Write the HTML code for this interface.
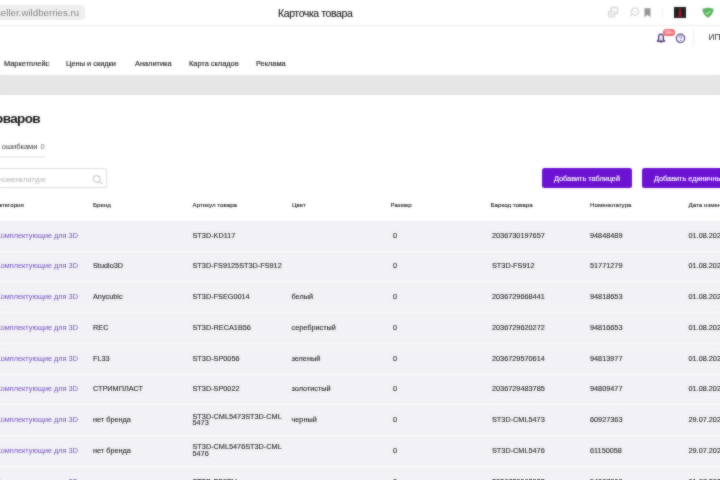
<!DOCTYPE html>
<html><head><meta charset="utf-8">
<style>
*{margin:0;padding:0;box-sizing:border-box}
html,body{width:720px;height:480px;overflow:hidden;background:#fff;font-family:"Liberation Sans",sans-serif;color:#222}
#page{position:absolute;left:0;top:0;width:720px;height:480px;overflow:hidden;background:#fff;}
.sharp{filter:blur(0.5px)}
.soft{filter:blur(1px);opacity:0.5}
.a{position:absolute;white-space:nowrap}
#top{position:absolute;left:0;top:0;width:720px;height:25.5px;background:#fff;border-bottom:1.5px solid #efefef}
.url{position:absolute;left:-10px;top:5px;width:95px;height:15px;background:#efefef;border-radius:4px}
.urlt{left:-4px;top:7px;font-size:9.6px;color:#858585;line-height:12px;letter-spacing:0.05px}
.title{left:278px;top:6px;font-size:10.5px;color:#1a1a1a;-webkit-text-stroke:0.1px #1a1a1a;letter-spacing:-0.4px;line-height:14px}
.nav{top:58.5px;font-size:7.4px;color:#1e1e1e;-webkit-text-stroke:0.15px #1e1e1e;line-height:10px}
#band{position:absolute;left:0;top:75px;width:720px;height:20px;background:#e6e6e6}
.h1{left:-5px;top:111px;font-size:13.5px;font-weight:bold;color:#151515;letter-spacing:-0.6px;line-height:16px}
.tab{left:-4px;top:141.5px;font-size:7.5px;color:#3a3a3a;line-height:10px}
.tabline{position:absolute;left:0;top:156px;width:46px;height:2px;background:#f0f0f0}
.search{position:absolute;left:-10px;top:168px;width:117px;height:20px;border:1px solid #e0e0e0;border-radius:2px}
.ph{left:-1px;top:174.5px;font-size:7.2px;color:#b4b4b4;line-height:10px}
.btn{position:absolute;top:168px;height:20px;background:#6c12d2;border-radius:2.5px;color:#fff;font-size:7.3px;line-height:22px;-webkit-text-stroke:0.15px #fff}
.th{top:200px;font-size:6.2px;font-weight:normal;color:#111;line-height:10px;-webkit-text-stroke:0.08px #111}
.sep{position:absolute;left:0;width:720px;height:5px;background:#f7f7fa;border-top:1px solid #efeff3;border-bottom:1px solid #efeff3}
.td{font-size:7.3px;color:#262626;line-height:10px;-webkit-text-stroke:0.1px #262626}
.cat{color:#7550c0;-webkit-text-stroke:0}
</style></head><body><div id="page" class="sharp">
<div id="top"></div>
<div class="url"></div>
<div class="a urlt">seller.wildberries.ru</div>
<div class="a title">Карточка товара</div>

<div class="a nav" style="left:4px">Маркетплейс</div>
<div class="a nav" style="left:66px">Цены и скидки</div>
<div class="a nav" style="left:135px">Аналитика</div>
<div class="a nav" style="left:189px">Карта складов</div>
<div class="a nav" style="left:256px">Реклама</div>
<div id="band"></div>

<div class="a h1">оваров</div>
<div class="a tab">с ошибками <span style="color:#777;margin-left:1px">0</span></div>
<div class="tabline"></div>
<div class="search"></div>
<div class="a ph">номенклатуре</div>

<div class="btn" style="left:542px;width:90px;text-align:center">Добавить таблицей</div>
<div class="btn" style="left:642px;width:100px;padding-left:12px">Добавить единичный</div>

<div class="a th" style="left:-5px">Категория</div>
<div class="a th" style="left:93px">Бренд</div>
<div class="a th" style="left:192.5px">Артикул товара</div>
<div class="a th" style="left:292px">Цвет</div>
<div class="a th" style="left:390.5px">Размер</div>
<div class="a th" style="left:490.5px">Баркод товара</div>
<div class="a th" style="left:590px">Номенклатура</div>
<div class="a th" style="left:688.5px">Дата изменения</div>


<svg class="a" style="left:606px;top:6px" width="14" height="12" viewBox="0 0 14 12">
 <rect x="5" y="1.5" width="6.5" height="6" rx="1.5" fill="none" stroke="#d6d6d6" stroke-width="1.4"/>
 <rect x="2.3" y="5" width="6.5" height="6" rx="1.5" fill="#ececec" stroke="#d9d9d9" stroke-width="1.1"/>
</svg>
<svg class="a" style="left:628px;top:6px" width="13" height="12" viewBox="0 0 13 12">
 <circle cx="7" cy="5.5" r="3.6" fill="none" stroke="#d9d9d9" stroke-width="1.4"/>
 <line x1="4.5" y1="8" x2="2.2" y2="10.3" stroke="#d9d9d9" stroke-width="1.4"/>
 <line x1="5.5" y1="5.5" x2="8.5" y2="5.5" stroke="#dedede" stroke-width="1"/>
</svg>
<svg class="a" style="left:643px;top:7px" width="9" height="11" viewBox="0 0 9 11">
 <path d="M1.5 1.2h6v9L4.5 7.8 1.5 10.2z" fill="#959595"/>
</svg>
<div style="position:absolute;left:662px;top:7px;width:1px;height:11px;background:#f4f4f4"></div>
<svg class="a" style="left:674px;top:6.5px" width="12" height="11.5" viewBox="0 0 12 11.5">
 <rect x="0" y="0" width="12" height="11.5" fill="#202020"/>
 <path d="M5.3 1.8h1.4l1.2 8.2H4.1z" fill="#8e1424"/>
 <rect x="5.6" y="1.2" width="0.8" height="9" fill="#b81d30"/>
</svg>
<svg class="a" style="left:701.5px;top:6.5px" width="12" height="11" viewBox="0 0 12 11">
 <path d="M6 0.5C8 1.3 9.8 1.6 11.5 1.6 11.4 6.2 9.2 9 6 10.7 2.8 9 0.6 6.2 0.5 1.6 2.2 1.6 4 1.3 6 0.5z" fill="#5bb360"/>
 <path d="M3.8 5.3 5.4 7 8.4 3.9" fill="none" stroke="#b5e6b8" stroke-width="1.2"/>
</svg>

<svg class="a" style="left:656px;top:32.8px" width="10" height="10" viewBox="0 0 10 10">
 <path d="M5 1.2C3.4 1.2 2.6 2.5 2.6 4.1v2.5L1.2 8.1h7.6L7.4 6.6V4.1C7.4 2.5 6.6 1.2 5 1.2z" fill="#eee8f8" stroke="#4a3278" stroke-width="1.2" stroke-linejoin="round"/>
 <path d="M3.2 8h3.6v1.3H3.2z" fill="#3c2468"/>
</svg>
<div style="position:absolute;left:662.8px;top:29px;width:12.5px;height:6.5px;background:#f06b6e;border-radius:3.3px"></div>
<div class="a" style="left:663.3px;top:29.3px;width:12px;text-align:center;font-size:5px;line-height:6px;color:#fde;font-weight:bold">99+</div>
<svg class="a" style="left:675px;top:32.5px" width="11" height="11" viewBox="0 0 11 11">
 <circle cx="5.5" cy="5.3" r="4.2" fill="#f3f0fa" stroke="#5a4a80" stroke-width="1.2"/>
 <path d="M4.3 4.2c0-.7.5-1.2 1.2-1.2s1.2.5 1.2 1.1c0 .8-1.1 .9-1.1 1.8" fill="none" stroke="#7a5cc0" stroke-width=".9"/>
 <circle cx="5.6" cy="7.4" r=".55" fill="#7a5cc0"/>
</svg>
<div style="position:absolute;left:693px;top:29px;width:1px;height:17px;background:#f0f0f0"></div>
<div class="a" style="left:708.5px;top:32.8px;font-size:8.2px;line-height:10px;color:#333">ИП</div>

<svg class="a" style="left:91px;top:172.5px" width="14" height="14" viewBox="0 0 14 14">
 <circle cx="5.7" cy="6" r="3.3" fill="none" stroke="#cfcfcf" stroke-width="1.2"/>
 <line x1="8.2" y1="8.5" x2="11.5" y2="11" stroke="#cfcfcf" stroke-width="1.3"/>
</svg>

<div style="position:absolute;left:0;top:221px;width:720px;height:259px;background:#f2f2f6"></div>
<div class="sep" style="top:248.7px"></div>
<div class="sep" style="top:279.4px"></div>
<div class="sep" style="top:310.1px"></div>
<div class="sep" style="top:340.9px"></div>
<div class="sep" style="top:371.6px"></div>
<div class="sep" style="top:402.3px"></div>
<div class="sep" style="top:433.0px"></div>
<div class="sep" style="top:463.7px"></div>
<div class="a td cat" style="left:-3.5px;top:230.6px">Комплектующие для 3D</div>
<div class="a td" style="left:192.5px;top:230.6px">ST3D-KD117</div>
<div class="a td" style="left:393px;top:230.6px">0</div>
<div class="a td" style="left:492px;top:230.6px">2036730197657</div>
<div class="a td" style="left:590px;top:230.6px">94848489</div>
<div class="a td" style="left:688.5px;top:230.6px">01.08.2021</div>
<div class="a td cat" style="left:-3.5px;top:261.3px">Комплектующие для 3D</div>
<div class="a td" style="left:93px;top:261.3px">Studio3D</div>
<div class="a td" style="left:192.5px;top:261.3px">ST3D-FS9125ST3D-FS912</div>
<div class="a td" style="left:393px;top:261.3px">0</div>
<div class="a td" style="left:492px;top:261.3px">ST3D-FS912</div>
<div class="a td" style="left:590px;top:261.3px">51771279</div>
<div class="a td" style="left:688.5px;top:261.3px">01.08.2021</div>
<div class="a td cat" style="left:-3.5px;top:292.0px">Комплектующие для 3D</div>
<div class="a td" style="left:93px;top:292.0px">Anycubic</div>
<div class="a td" style="left:192.5px;top:292.0px">ST3D-FSEG0014</div>
<div class="a td" style="left:291.5px;top:292.0px">белый</div>
<div class="a td" style="left:393px;top:292.0px">0</div>
<div class="a td" style="left:492px;top:292.0px">2036729668441</div>
<div class="a td" style="left:590px;top:292.0px">94818653</div>
<div class="a td" style="left:688.5px;top:292.0px">01.08.2021</div>
<div class="a td cat" style="left:-3.5px;top:322.8px">Комплектующие для 3D</div>
<div class="a td" style="left:93px;top:322.8px">REC</div>
<div class="a td" style="left:192.5px;top:322.8px">ST3D-RECA1B56</div>
<div class="a td" style="left:291.5px;top:322.8px">серебристый</div>
<div class="a td" style="left:393px;top:322.8px">0</div>
<div class="a td" style="left:492px;top:322.8px">2036729620272</div>
<div class="a td" style="left:590px;top:322.8px">94816653</div>
<div class="a td" style="left:688.5px;top:322.8px">01.08.2021</div>
<div class="a td cat" style="left:-3.5px;top:353.5px">Комплектующие для 3D</div>
<div class="a td" style="left:93px;top:353.5px">FL33</div>
<div class="a td" style="left:192.5px;top:353.5px">ST3D-SP0056</div>
<div class="a td" style="left:291.5px;top:353.5px">зеленый</div>
<div class="a td" style="left:393px;top:353.5px">0</div>
<div class="a td" style="left:492px;top:353.5px">2036729570614</div>
<div class="a td" style="left:590px;top:353.5px">94813977</div>
<div class="a td" style="left:688.5px;top:353.5px">01.08.2021</div>
<div class="a td cat" style="left:-3.5px;top:384.2px">Комплектующие для 3D</div>
<div class="a td" style="left:93px;top:384.2px">СТРИМПЛАСТ</div>
<div class="a td" style="left:192.5px;top:384.2px">ST3D-SP0022</div>
<div class="a td" style="left:291.5px;top:384.2px">золотистый</div>
<div class="a td" style="left:393px;top:384.2px">0</div>
<div class="a td" style="left:492px;top:384.2px">2036729483785</div>
<div class="a td" style="left:590px;top:384.2px">94809477</div>
<div class="a td" style="left:688.5px;top:384.2px">01.08.2021</div>
<div class="a td cat" style="left:-3.5px;top:414.9px">Комплектующие для 3D</div>
<div class="a td" style="left:93px;top:414.9px">нет бренда</div>
<div class="a td" style="left:192.5px;top:411.6px">ST3D-CML5473ST3D-CML</div>
<div class="a td" style="left:192.5px;top:418.2px">5473</div>
<div class="a td" style="left:291.5px;top:414.9px">черный</div>
<div class="a td" style="left:393px;top:414.9px">0</div>
<div class="a td" style="left:492px;top:414.9px">ST3D-CML5473</div>
<div class="a td" style="left:590px;top:414.9px">60927363</div>
<div class="a td" style="left:688.5px;top:414.9px">29.07.2021</div>
<div class="a td cat" style="left:-3.5px;top:445.6px">Комплектующие для 3D</div>
<div class="a td" style="left:93px;top:445.6px">нет бренда</div>
<div class="a td" style="left:192.5px;top:442.3px">ST3D-CML5476ST3D-CML</div>
<div class="a td" style="left:192.5px;top:448.9px">5476</div>
<div class="a td" style="left:393px;top:445.6px">0</div>
<div class="a td" style="left:492px;top:445.6px">ST3D-CML5476</div>
<div class="a td" style="left:590px;top:445.6px">61150058</div>
<div class="a td" style="left:688.5px;top:445.6px">29.07.2021</div>
<div class="a td cat" style="left:-3.5px;top:477.4px">Комплектующие для 3D</div>
<div class="a td" style="left:192.5px;top:477.4px">ST3D-FS9EV</div>
<div class="a td" style="left:393px;top:477.4px">0</div>
<div class="a td" style="left:492px;top:477.4px">2036729562933</div>
<div class="a td" style="left:590px;top:477.4px">54007000</div>
<div class="a td" style="left:688.5px;top:477.4px">01.07.2021</div>
</div>
<div id="page2" class="soft" style="position:absolute;left:0;top:0;width:720px;height:480px;overflow:hidden;background:#fff">
<div id="top"></div>
<div class="url"></div>
<div class="a urlt">seller.wildberries.ru</div>
<div class="a title">Карточка товара</div>

<div class="a nav" style="left:4px">Маркетплейс</div>
<div class="a nav" style="left:66px">Цены и скидки</div>
<div class="a nav" style="left:135px">Аналитика</div>
<div class="a nav" style="left:189px">Карта складов</div>
<div class="a nav" style="left:256px">Реклама</div>
<div id="band"></div>

<div class="a h1">оваров</div>
<div class="a tab">с ошибками <span style="color:#777;margin-left:1px">0</span></div>
<div class="tabline"></div>
<div class="search"></div>
<div class="a ph">номенклатуре</div>

<div class="btn" style="left:542px;width:90px;text-align:center">Добавить таблицей</div>
<div class="btn" style="left:642px;width:100px;padding-left:12px">Добавить единичный</div>

<div class="a th" style="left:-5px">Категория</div>
<div class="a th" style="left:93px">Бренд</div>
<div class="a th" style="left:192.5px">Артикул товара</div>
<div class="a th" style="left:292px">Цвет</div>
<div class="a th" style="left:390.5px">Размер</div>
<div class="a th" style="left:490.5px">Баркод товара</div>
<div class="a th" style="left:590px">Номенклатура</div>
<div class="a th" style="left:688.5px">Дата изменения</div>


<svg class="a" style="left:606px;top:6px" width="14" height="12" viewBox="0 0 14 12">
 <rect x="5" y="1.5" width="6.5" height="6" rx="1.5" fill="none" stroke="#d6d6d6" stroke-width="1.4"/>
 <rect x="2.3" y="5" width="6.5" height="6" rx="1.5" fill="#ececec" stroke="#d9d9d9" stroke-width="1.1"/>
</svg>
<svg class="a" style="left:628px;top:6px" width="13" height="12" viewBox="0 0 13 12">
 <circle cx="7" cy="5.5" r="3.6" fill="none" stroke="#d9d9d9" stroke-width="1.4"/>
 <line x1="4.5" y1="8" x2="2.2" y2="10.3" stroke="#d9d9d9" stroke-width="1.4"/>
 <line x1="5.5" y1="5.5" x2="8.5" y2="5.5" stroke="#dedede" stroke-width="1"/>
</svg>
<svg class="a" style="left:643px;top:7px" width="9" height="11" viewBox="0 0 9 11">
 <path d="M1.5 1.2h6v9L4.5 7.8 1.5 10.2z" fill="#959595"/>
</svg>
<div style="position:absolute;left:662px;top:7px;width:1px;height:11px;background:#f4f4f4"></div>
<svg class="a" style="left:674px;top:6.5px" width="12" height="11.5" viewBox="0 0 12 11.5">
 <rect x="0" y="0" width="12" height="11.5" fill="#202020"/>
 <path d="M5.3 1.8h1.4l1.2 8.2H4.1z" fill="#8e1424"/>
 <rect x="5.6" y="1.2" width="0.8" height="9" fill="#b81d30"/>
</svg>
<svg class="a" style="left:701.5px;top:6.5px" width="12" height="11" viewBox="0 0 12 11">
 <path d="M6 0.5C8 1.3 9.8 1.6 11.5 1.6 11.4 6.2 9.2 9 6 10.7 2.8 9 0.6 6.2 0.5 1.6 2.2 1.6 4 1.3 6 0.5z" fill="#5bb360"/>
 <path d="M3.8 5.3 5.4 7 8.4 3.9" fill="none" stroke="#b5e6b8" stroke-width="1.2"/>
</svg>

<svg class="a" style="left:656px;top:32.8px" width="10" height="10" viewBox="0 0 10 10">
 <path d="M5 1.2C3.4 1.2 2.6 2.5 2.6 4.1v2.5L1.2 8.1h7.6L7.4 6.6V4.1C7.4 2.5 6.6 1.2 5 1.2z" fill="#eee8f8" stroke="#4a3278" stroke-width="1.2" stroke-linejoin="round"/>
 <path d="M3.2 8h3.6v1.3H3.2z" fill="#3c2468"/>
</svg>
<div style="position:absolute;left:662.8px;top:29px;width:12.5px;height:6.5px;background:#f06b6e;border-radius:3.3px"></div>
<div class="a" style="left:663.3px;top:29.3px;width:12px;text-align:center;font-size:5px;line-height:6px;color:#fde;font-weight:bold">99+</div>
<svg class="a" style="left:675px;top:32.5px" width="11" height="11" viewBox="0 0 11 11">
 <circle cx="5.5" cy="5.3" r="4.2" fill="#f3f0fa" stroke="#5a4a80" stroke-width="1.2"/>
 <path d="M4.3 4.2c0-.7.5-1.2 1.2-1.2s1.2.5 1.2 1.1c0 .8-1.1 .9-1.1 1.8" fill="none" stroke="#7a5cc0" stroke-width=".9"/>
 <circle cx="5.6" cy="7.4" r=".55" fill="#7a5cc0"/>
</svg>
<div style="position:absolute;left:693px;top:29px;width:1px;height:17px;background:#f0f0f0"></div>
<div class="a" style="left:708.5px;top:32.8px;font-size:8.2px;line-height:10px;color:#333">ИП</div>

<svg class="a" style="left:91px;top:172.5px" width="14" height="14" viewBox="0 0 14 14">
 <circle cx="5.7" cy="6" r="3.3" fill="none" stroke="#cfcfcf" stroke-width="1.2"/>
 <line x1="8.2" y1="8.5" x2="11.5" y2="11" stroke="#cfcfcf" stroke-width="1.3"/>
</svg>

<div style="position:absolute;left:0;top:221px;width:720px;height:259px;background:#f2f2f6"></div>
<div class="sep" style="top:248.7px"></div>
<div class="sep" style="top:279.4px"></div>
<div class="sep" style="top:310.1px"></div>
<div class="sep" style="top:340.9px"></div>
<div class="sep" style="top:371.6px"></div>
<div class="sep" style="top:402.3px"></div>
<div class="sep" style="top:433.0px"></div>
<div class="sep" style="top:463.7px"></div>
<div class="a td cat" style="left:-3.5px;top:230.6px">Комплектующие для 3D</div>
<div class="a td" style="left:192.5px;top:230.6px">ST3D-KD117</div>
<div class="a td" style="left:393px;top:230.6px">0</div>
<div class="a td" style="left:492px;top:230.6px">2036730197657</div>
<div class="a td" style="left:590px;top:230.6px">94848489</div>
<div class="a td" style="left:688.5px;top:230.6px">01.08.2021</div>
<div class="a td cat" style="left:-3.5px;top:261.3px">Комплектующие для 3D</div>
<div class="a td" style="left:93px;top:261.3px">Studio3D</div>
<div class="a td" style="left:192.5px;top:261.3px">ST3D-FS9125ST3D-FS912</div>
<div class="a td" style="left:393px;top:261.3px">0</div>
<div class="a td" style="left:492px;top:261.3px">ST3D-FS912</div>
<div class="a td" style="left:590px;top:261.3px">51771279</div>
<div class="a td" style="left:688.5px;top:261.3px">01.08.2021</div>
<div class="a td cat" style="left:-3.5px;top:292.0px">Комплектующие для 3D</div>
<div class="a td" style="left:93px;top:292.0px">Anycubic</div>
<div class="a td" style="left:192.5px;top:292.0px">ST3D-FSEG0014</div>
<div class="a td" style="left:291.5px;top:292.0px">белый</div>
<div class="a td" style="left:393px;top:292.0px">0</div>
<div class="a td" style="left:492px;top:292.0px">2036729668441</div>
<div class="a td" style="left:590px;top:292.0px">94818653</div>
<div class="a td" style="left:688.5px;top:292.0px">01.08.2021</div>
<div class="a td cat" style="left:-3.5px;top:322.8px">Комплектующие для 3D</div>
<div class="a td" style="left:93px;top:322.8px">REC</div>
<div class="a td" style="left:192.5px;top:322.8px">ST3D-RECA1B56</div>
<div class="a td" style="left:291.5px;top:322.8px">серебристый</div>
<div class="a td" style="left:393px;top:322.8px">0</div>
<div class="a td" style="left:492px;top:322.8px">2036729620272</div>
<div class="a td" style="left:590px;top:322.8px">94816653</div>
<div class="a td" style="left:688.5px;top:322.8px">01.08.2021</div>
<div class="a td cat" style="left:-3.5px;top:353.5px">Комплектующие для 3D</div>
<div class="a td" style="left:93px;top:353.5px">FL33</div>
<div class="a td" style="left:192.5px;top:353.5px">ST3D-SP0056</div>
<div class="a td" style="left:291.5px;top:353.5px">зеленый</div>
<div class="a td" style="left:393px;top:353.5px">0</div>
<div class="a td" style="left:492px;top:353.5px">2036729570614</div>
<div class="a td" style="left:590px;top:353.5px">94813977</div>
<div class="a td" style="left:688.5px;top:353.5px">01.08.2021</div>
<div class="a td cat" style="left:-3.5px;top:384.2px">Комплектующие для 3D</div>
<div class="a td" style="left:93px;top:384.2px">СТРИМПЛАСТ</div>
<div class="a td" style="left:192.5px;top:384.2px">ST3D-SP0022</div>
<div class="a td" style="left:291.5px;top:384.2px">золотистый</div>
<div class="a td" style="left:393px;top:384.2px">0</div>
<div class="a td" style="left:492px;top:384.2px">2036729483785</div>
<div class="a td" style="left:590px;top:384.2px">94809477</div>
<div class="a td" style="left:688.5px;top:384.2px">01.08.2021</div>
<div class="a td cat" style="left:-3.5px;top:414.9px">Комплектующие для 3D</div>
<div class="a td" style="left:93px;top:414.9px">нет бренда</div>
<div class="a td" style="left:192.5px;top:411.6px">ST3D-CML5473ST3D-CML</div>
<div class="a td" style="left:192.5px;top:418.2px">5473</div>
<div class="a td" style="left:291.5px;top:414.9px">черный</div>
<div class="a td" style="left:393px;top:414.9px">0</div>
<div class="a td" style="left:492px;top:414.9px">ST3D-CML5473</div>
<div class="a td" style="left:590px;top:414.9px">60927363</div>
<div class="a td" style="left:688.5px;top:414.9px">29.07.2021</div>
<div class="a td cat" style="left:-3.5px;top:445.6px">Комплектующие для 3D</div>
<div class="a td" style="left:93px;top:445.6px">нет бренда</div>
<div class="a td" style="left:192.5px;top:442.3px">ST3D-CML5476ST3D-CML</div>
<div class="a td" style="left:192.5px;top:448.9px">5476</div>
<div class="a td" style="left:393px;top:445.6px">0</div>
<div class="a td" style="left:492px;top:445.6px">ST3D-CML5476</div>
<div class="a td" style="left:590px;top:445.6px">61150058</div>
<div class="a td" style="left:688.5px;top:445.6px">29.07.2021</div>
<div class="a td cat" style="left:-3.5px;top:477.4px">Комплектующие для 3D</div>
<div class="a td" style="left:192.5px;top:477.4px">ST3D-FS9EV</div>
<div class="a td" style="left:393px;top:477.4px">0</div>
<div class="a td" style="left:492px;top:477.4px">2036729562933</div>
<div class="a td" style="left:590px;top:477.4px">54007000</div>
<div class="a td" style="left:688.5px;top:477.4px">01.07.2021</div>
</div></body></html>
